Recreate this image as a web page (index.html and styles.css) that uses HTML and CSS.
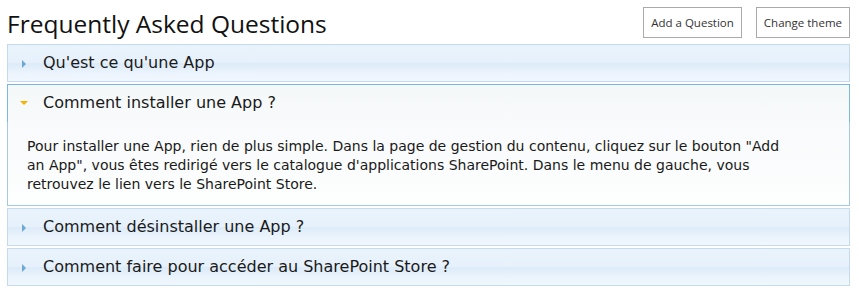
FILE: index.html
```html
<!DOCTYPE html>
<html lang="fr">
<head>
  <meta charset="UTF-8" />
  <meta name="viewport" content="width=device-width, initial-scale=1.0" />
  <title>Frequently Asked Questions</title>
  <link rel="stylesheet" href="styles.css">
</head>
<body>

  <div class="page">
    <div class="top-bar">
      <h1>Frequently Asked Questions</h1>
      <div class="actions">
        <button type="button">Add a Question</button>
        <button type="button">Change theme</button>
      </div>
    </div>

    <div class="accordion">
      <h3 class="acc-header"><span class="icon icon-closed"></span>Qu'est ce qu'une App</h3>

      <h3 class="acc-header active"><span class="icon icon-open"></span>Comment installer une App ?</h3>
      <div class="acc-content">
        Pour installer une App, rien de plus simple. Dans la page de gestion du contenu, cliquez sur le bouton "Add an App", vous êtes redirigé vers le catalogue d'applications SharePoint. Dans le menu de gauche, vous retrouvez le lien vers le SharePoint Store.
      </div>

      <h3 class="acc-header"><span class="icon icon-closed"></span>Comment désinstaller une App ?</h3>

      <h3 class="acc-header"><span class="icon icon-closed"></span>Comment faire pour accéder au SharePoint Store ?</h3>
    </div>
  </div>

</body>
</html>
```

FILE: styles.css
```css
body {
  margin: 0;
  background-color: #fff;
  color: #222;
  font-family: "DejaVu Sans", Verdana, sans-serif;
}

.page {
  width: 843px;
  padding: 0 9px 0 7px;
}

.top-bar {
  display: flex;
  justify-content: space-between;
  align-items: flex-start;
  height: 44px;
}

h1 {
  margin: 0;
  padding-top: 9px;
  font-family: "Open Sans", sans-serif;
  font-weight: normal;
  font-size: 24.5px;
  line-height: 30px;
  color: #111;
}

.actions {
  display: flex;
  gap: 14px;
  padding-top: 7px;
}

button {
  font-family: "Open Sans", sans-serif;
  font-size: 11.5px;
  height: 31px;
  padding: 0 7px;
  background-color: #fff;
  color: #333;
  border: 1px solid #aaa;
  cursor: pointer;
}

.accordion {
  display: flex;
  flex-direction: column;
}

.acc-header {
  position: relative;
  margin: 0 0 2px 0;
  height: 36px;
  line-height: 36px;
  padding-left: 35px;
  font-size: 16px;
  font-weight: normal;
  color: #1a1a1a;
  border: 1px solid #c5dbec;
  background: linear-gradient(#e9f3fc 0%, #e7f1fb 48%, #dcebf9 52%, #eaf3fc 75%, #f1f7fd 100%);
}

.acc-header.active {
  margin-bottom: 0;
  border-color: #79b7e7;
  border-bottom: none;
  height: 37px;
  background: linear-gradient(#f5f8f9, #f8fafb);
}

.acc-content {
  margin-bottom: 2px;
  padding: 15px 52px 11px 19px;
  font-size: 14px;
  line-height: 19px;
  color: #1a1a1a;
  border: 1px solid #a6c9e2;
  border-top: none;
  background: linear-gradient(#f8fafb, #fdfefe);
}

.icon {
  position: absolute;
  left: 14px;
  top: 15px;
  width: 0;
  height: 0;
}

.icon-closed {
  border-top: 4px solid transparent;
  border-bottom: 4px solid transparent;
  border-left: 4px solid #6da8d5;
}

.icon-open {
  left: 12px;
  top: 16px;
  border-left: 4px solid transparent;
  border-right: 4px solid transparent;
  border-top: 4px solid #f6b100;
}
```
